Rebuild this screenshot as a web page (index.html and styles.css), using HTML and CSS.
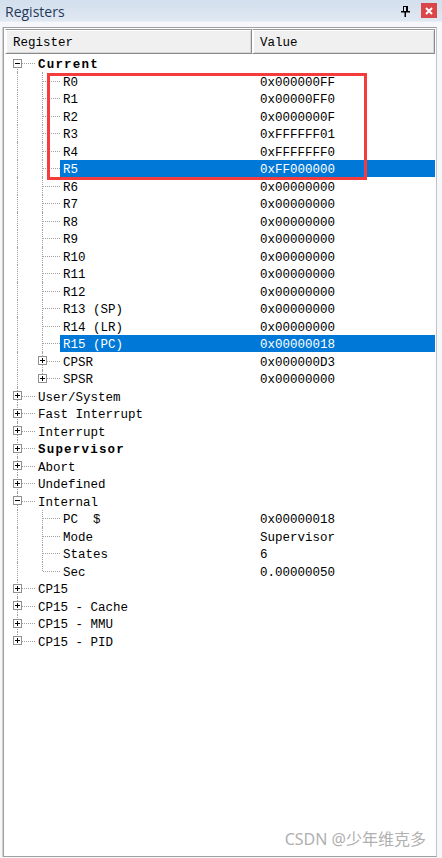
FILE: index.html
```html
<!DOCTYPE html>
<html>
<head>
<meta charset="utf-8">
<link rel="stylesheet" href="styles.css">
</head>
<body>
<div class="titlebar">
  <span class="title">Registers</span>
  <svg class="pin" width="9" height="11" viewBox="0 0 9 11"><rect x="2.5" y="0.5" width="4" height="5" fill="none" stroke="#000"/><rect x="5" y="0" width="2" height="6" fill="#000"/><rect x="0" y="5" width="9" height="1.5" fill="#000"/><rect x="3.5" y="6" width="1.5" height="5" fill="#000"/></svg>
  <span class="close"><svg width="8" height="8" viewBox="0 0 8 8"><path d="M1 1L7 7M7 1L1 7" stroke="#fff" stroke-width="2"/></svg></span>
</div>
<div class="panel">
  <div class="list">
    <div class="header">
      <div class="hcell hname">Register</div>
      <div class="hcell hval">Value</div>
    </div>
    <div class="rows">
      <div class="row"><span class="g f"><span class="box"></span></span><div class="cell"><span class="name b">Current</span><span class="val"></span></div></div>
      <div class="row"><span class="g v"></span><span class="g t"></span><div class="cell"><span class="name">R0</span><span class="val">0x000000FF</span></div></div>
      <div class="row"><span class="g v"></span><span class="g t"></span><div class="cell"><span class="name">R1</span><span class="val">0x00000FF0</span></div></div>
      <div class="row"><span class="g v"></span><span class="g t"></span><div class="cell"><span class="name">R2</span><span class="val">0x0000000F</span></div></div>
      <div class="row"><span class="g v"></span><span class="g t"></span><div class="cell"><span class="name">R3</span><span class="val">0xFFFFFF01</span></div></div>
      <div class="row"><span class="g v"></span><span class="g t"></span><div class="cell"><span class="name">R4</span><span class="val">0xFFFFFFF0</span></div></div>
      <div class="row"><span class="g v"></span><span class="g t"></span><div class="cell sel"><span class="name">R5</span><span class="val">0xFF000000</span></div></div>
      <div class="row"><span class="g v"></span><span class="g t"></span><div class="cell"><span class="name">R6</span><span class="val">0x00000000</span></div></div>
      <div class="row"><span class="g v"></span><span class="g t"></span><div class="cell"><span class="name">R7</span><span class="val">0x00000000</span></div></div>
      <div class="row"><span class="g v"></span><span class="g t"></span><div class="cell"><span class="name">R8</span><span class="val">0x00000000</span></div></div>
      <div class="row"><span class="g v"></span><span class="g t"></span><div class="cell"><span class="name">R9</span><span class="val">0x00000000</span></div></div>
      <div class="row"><span class="g v"></span><span class="g t"></span><div class="cell"><span class="name">R10</span><span class="val">0x00000000</span></div></div>
      <div class="row"><span class="g v"></span><span class="g t"></span><div class="cell"><span class="name">R11</span><span class="val">0x00000000</span></div></div>
      <div class="row"><span class="g v"></span><span class="g t"></span><div class="cell"><span class="name">R12</span><span class="val">0x00000000</span></div></div>
      <div class="row"><span class="g v"></span><span class="g t"></span><div class="cell"><span class="name">R13 (SP)</span><span class="val">0x00000000</span></div></div>
      <div class="row"><span class="g v"></span><span class="g t"></span><div class="cell"><span class="name">R14 (LR)</span><span class="val">0x00000000</span></div></div>
      <div class="row"><span class="g v"></span><span class="g t"></span><div class="cell sel"><span class="name">R15 (PC)</span><span class="val">0x00000018</span></div></div>
      <div class="row"><span class="g v"></span><span class="g t"><span class="box plus"></span></span><div class="cell"><span class="name">CPSR</span><span class="val">0x000000D3</span></div></div>
      <div class="row"><span class="g v"></span><span class="g l"><span class="box plus"></span></span><div class="cell"><span class="name">SPSR</span><span class="val">0x00000000</span></div></div>
      <div class="row"><span class="g t"><span class="box plus"></span></span><div class="cell"><span class="name">User/System</span><span class="val"></span></div></div>
      <div class="row"><span class="g t"><span class="box plus"></span></span><div class="cell"><span class="name">Fast Interrupt</span><span class="val"></span></div></div>
      <div class="row"><span class="g t"><span class="box plus"></span></span><div class="cell"><span class="name">Interrupt</span><span class="val"></span></div></div>
      <div class="row"><span class="g t"><span class="box plus"></span></span><div class="cell"><span class="name b">Supervisor</span><span class="val"></span></div></div>
      <div class="row"><span class="g t"><span class="box plus"></span></span><div class="cell"><span class="name">Abort</span><span class="val"></span></div></div>
      <div class="row"><span class="g t"><span class="box plus"></span></span><div class="cell"><span class="name">Undefined</span><span class="val"></span></div></div>
      <div class="row"><span class="g t"><span class="box"></span></span><div class="cell"><span class="name">Internal</span><span class="val"></span></div></div>
      <div class="row"><span class="g v"></span><span class="g t"></span><div class="cell"><span class="name">PC  $</span><span class="val">0x00000018</span></div></div>
      <div class="row"><span class="g v"></span><span class="g t"></span><div class="cell"><span class="name">Mode</span><span class="val">Supervisor</span></div></div>
      <div class="row"><span class="g v"></span><span class="g t"></span><div class="cell"><span class="name">States</span><span class="val">6</span></div></div>
      <div class="row"><span class="g v"></span><span class="g l"></span><div class="cell"><span class="name">Sec</span><span class="val">0.00000050</span></div></div>
      <div class="row"><span class="g t"><span class="box plus"></span></span><div class="cell"><span class="name">CP15</span><span class="val"></span></div></div>
      <div class="row"><span class="g t"><span class="box plus"></span></span><div class="cell"><span class="name">CP15 - Cache</span><span class="val"></span></div></div>
      <div class="row"><span class="g t"><span class="box plus"></span></span><div class="cell"><span class="name">CP15 - MMU</span><span class="val"></span></div></div>
      <div class="row"><span class="g l"><span class="box plus"></span></span><div class="cell"><span class="name">CP15 - PID</span><span class="val"></span></div></div>
    </div>
  </div>
</div>
<div class="annot"></div>
<div class="watermark">CSDN @少年维克多</div>
</body>
</html>
```

FILE: styles.css
```css
html, body {
  margin: 0;
  padding: 0;
}
body {
  width: 442px;
  height: 858px;
  overflow: hidden;
  position: relative;
  background: #f0f0f0;
  font-family: "Liberation Mono", "DejaVu Sans Mono", monospace;
  color: #000;
}
.titlebar {
  height: 21px;
  display: flex;
  align-items: center;
  padding: 0 5px;
  background: linear-gradient(#d3dfed, #e0e8f2);
  border-bottom: 1px solid #e9eef5;
}
.title {
  flex: 1;
  font: 14px "Open Sans", "Liberation Sans", sans-serif;
  color: #1e395b;
  padding-top: 1px;
}
.pin {
  margin-right: 11px;
  margin-top: 1px;
}
.close {
  width: 16px;
  height: 15px;
  background: #d9474b;
  display: flex;
  align-items: center;
  justify-content: center;
}
.panel {
  padding: 5px 5px 1px 3px;
  background: #f5f7fa;
}
.list {
  box-sizing: border-box;
  height: 830px;
  border: 1px solid #a0a0a0;
  border-right-color: #c4c4c4;
  padding: 1px;
  background: #fff;
  box-shadow: -1px 0 0 #d0d0d0;
}
.header {
  display: flex;
  height: 25px;
  font-size: 12.5px;
}
.hcell {
  box-sizing: border-box;
  height: 25px;
  padding-top: 4px;
  line-height: 19px;
  padding-left: 7px;
  background: #f0f0f0;
  border: 1px solid;
  border-color: #9a9a9a #8a8a8a #8a8a8a #ffffff;
  box-shadow: inset 1px 1px 0 #ffffff, inset -1px -1px 0 #d6d6d6;
}
.hname {
  width: 247px;
}
.hval {
  flex: 1;
}
.rows {
  padding-top: 0.5px;
  font-size: 12.5px;
}
.row {
  display: flex;
  height: 17.5px;
  padding-left: 2px;
}
.g {
  width: 25px;
  flex: none;
  position: relative;
}
.g::before,
.g::after {
  content: "";
  position: absolute;
}
.g.v::before,
.g.t::before {
  left: 10px;
  top: 0;
  bottom: 0;
  border-left: 1px dotted #a0a0a0;
}
.g.l::before {
  left: 10px;
  top: 0;
  height: 50%;
  border-left: 1px dotted #a0a0a0;
}
.g.f::before {
  left: 10px;
  top: 50%;
  bottom: 0;
  border-left: 1px dotted #a0a0a0;
}
.g.t::after,
.g.l::after,
.g.f::after {
  left: 11px;
  right: -3px;
  top: 50%;
  border-top: 1px dotted #a0a0a0;
}
.box {
  position: absolute;
  left: 6px;
  top: 4px;
  width: 9px;
  height: 9px;
  box-sizing: border-box;
  border: 1px solid #919191;
  background: #fff;
  z-index: 1;
}
.box::before {
  content: "";
  position: absolute;
  left: 1px;
  right: 1px;
  top: 3px;
  height: 1px;
  background: #000;
}
.box.plus::after {
  content: "";
  position: absolute;
  left: 3px;
  width: 1px;
  top: 1px;
  bottom: 1px;
  background: #000;
}
.cell {
  flex: 1;
  display: flex;
  margin-left: 3px;
}
.cell.sel {
  background: #0078d7;
  color: #fff;
}
.name,
.val {
  box-sizing: border-box;
  padding-top: 3.5px;
  line-height: 14px;
  white-space: pre;
}
.name {
  flex: 1;
  padding-left: 3px;
}
.name.b {
  font-weight: bold;
  letter-spacing: 1.2px;
}
.val {
  width: 175px;
  flex: none;
}
.annot {
  position: absolute;
  left: 47px;
  top: 73px;
  width: 320px;
  height: 107px;
  box-sizing: border-box;
  border: 3px solid #f53b3b;
}
.watermark {
  position: absolute;
  right: 16px;
  bottom: 8px;
  font: 16px "Noto Sans", "Noto Sans CJK SC", sans-serif;
  color: #b0b0b0;
  text-shadow: 0 0 1px #fff;
}
```
